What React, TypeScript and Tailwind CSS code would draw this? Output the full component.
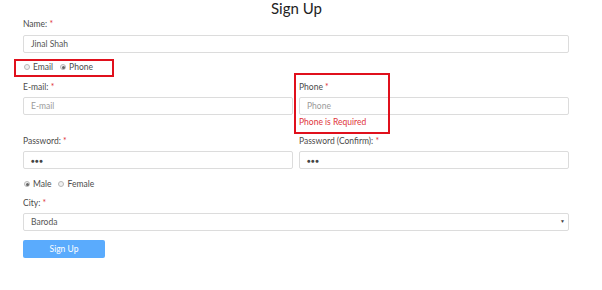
import React from "react";

const Req = () => <span className="text-[#e0343a]"> *</span>;

const Label = ({ children, cls = "" }: { children: React.ReactNode; cls?: string }) => (
  <div className={`h-[10px] text-[8.5px] leading-[10px] text-[#4a4a4a] ${cls}`}>{children}</div>
);

const Input = ({ value, placeholder, dots }: { value?: string; placeholder?: string; dots?: boolean }) => (
  <div className="h-[18px] border border-[#dcdcdc] rounded-[2px] bg-white flex items-center px-[7px] text-[8.5px]">
    {dots ? (
      <span className="text-[#444] text-[6px] tracking-[0.5px]">●●●</span>
    ) : value ? (
      <span className="text-[#555]">{value}</span>
    ) : (
      <span className="text-[#9a9a9a]">{placeholder}</span>
    )}
  </div>
);

const Radio = ({ checked, label }: { checked?: boolean; label: string }) => (
  <span className="flex items-center gap-[3px]">
    <span className="w-[6px] h-[6px] rounded-full border border-[#b8b8b8] bg-[#f0f0f0] flex items-center justify-center">
      {checked && <span className="w-[3px] h-[3px] rounded-full bg-[#666]" />}
    </span>
    <span className="text-[8.5px] text-[#4a4a4a] leading-[10px]">{label}</span>
  </span>
);

export default function App() {
  return (
    <div className="relative w-[602px] h-[290px] bg-white" style={{ fontFamily: 'Lato, "Open Sans", sans-serif' }}>
      <div className="w-[593px] h-[17px] flex items-center justify-center text-[15px] leading-[17px] text-[#222]">Sign Up</div>
      <div className="px-[23px] w-[592px] flex flex-col">
        <Label cls="mt-[2px]">Name:<Req /></Label>
        <div className="mt-[6px]"><Input value="Jinal Shah" /></div>
        <div className="mt-[9px] h-[10px] flex items-center gap-[7px] pl-[1px]">
          <Radio label="Email" />
          <Radio checked label="Phone" />
        </div>
        <div className="mt-[10px] grid grid-cols-2 gap-[6px]">
          <div>
            <Label>E-mail:<Req /></Label>
            <div className="mt-[5px]"><Input placeholder="E-mail" /></div>
          </div>
          <div>
            <Label>Phone<Req /></Label>
            <div className="mt-[5px]"><Input placeholder="Phone" /></div>
            <div className="mt-[2px] h-[10px] text-[8.5px] leading-[10px] text-[#e0343a]">Phone is Required</div>
          </div>
        </div>
        <div className="mt-[9px] grid grid-cols-2 gap-[6px]">
          <div>
            <Label>Password:<Req /></Label>
            <div className="mt-[5px]"><Input dots /></div>
          </div>
          <div>
            <Label>Password (Confirm):<Req /></Label>
            <div className="mt-[5px]"><Input dots /></div>
          </div>
        </div>
        <div className="mt-[10px] h-[10px] flex items-center gap-[7px] pl-[1px]">
          <Radio checked label="Male" />
          <Radio label="Female" />
        </div>
        <Label cls="mt-[9px]">City:<Req /></Label>
        <div className="mt-[5px] h-[18px] border border-[#dcdcdc] rounded-[2px] bg-white flex items-center justify-between pl-[7px] pr-[3px] text-[8.5px]">
          <span className="text-[#555]">Baroda</span>
          <span className="text-[5px] text-[#444]">▼</span>
        </div>
        <div className="mt-[9px] w-[82px] h-[18px] rounded-[2px] bg-[#5aabfd] flex items-center justify-center text-[8.5px] text-white">Sign Up</div>
      </div>
      <div className="absolute left-[14px] top-[59px] w-[100px] h-[18px] border-2 border-[#e0101c]" />
      <div className="absolute left-[294px] top-[73px] w-[96px] h-[61px] border-2 border-[#e0101c]" />
    </div>
  );
}
